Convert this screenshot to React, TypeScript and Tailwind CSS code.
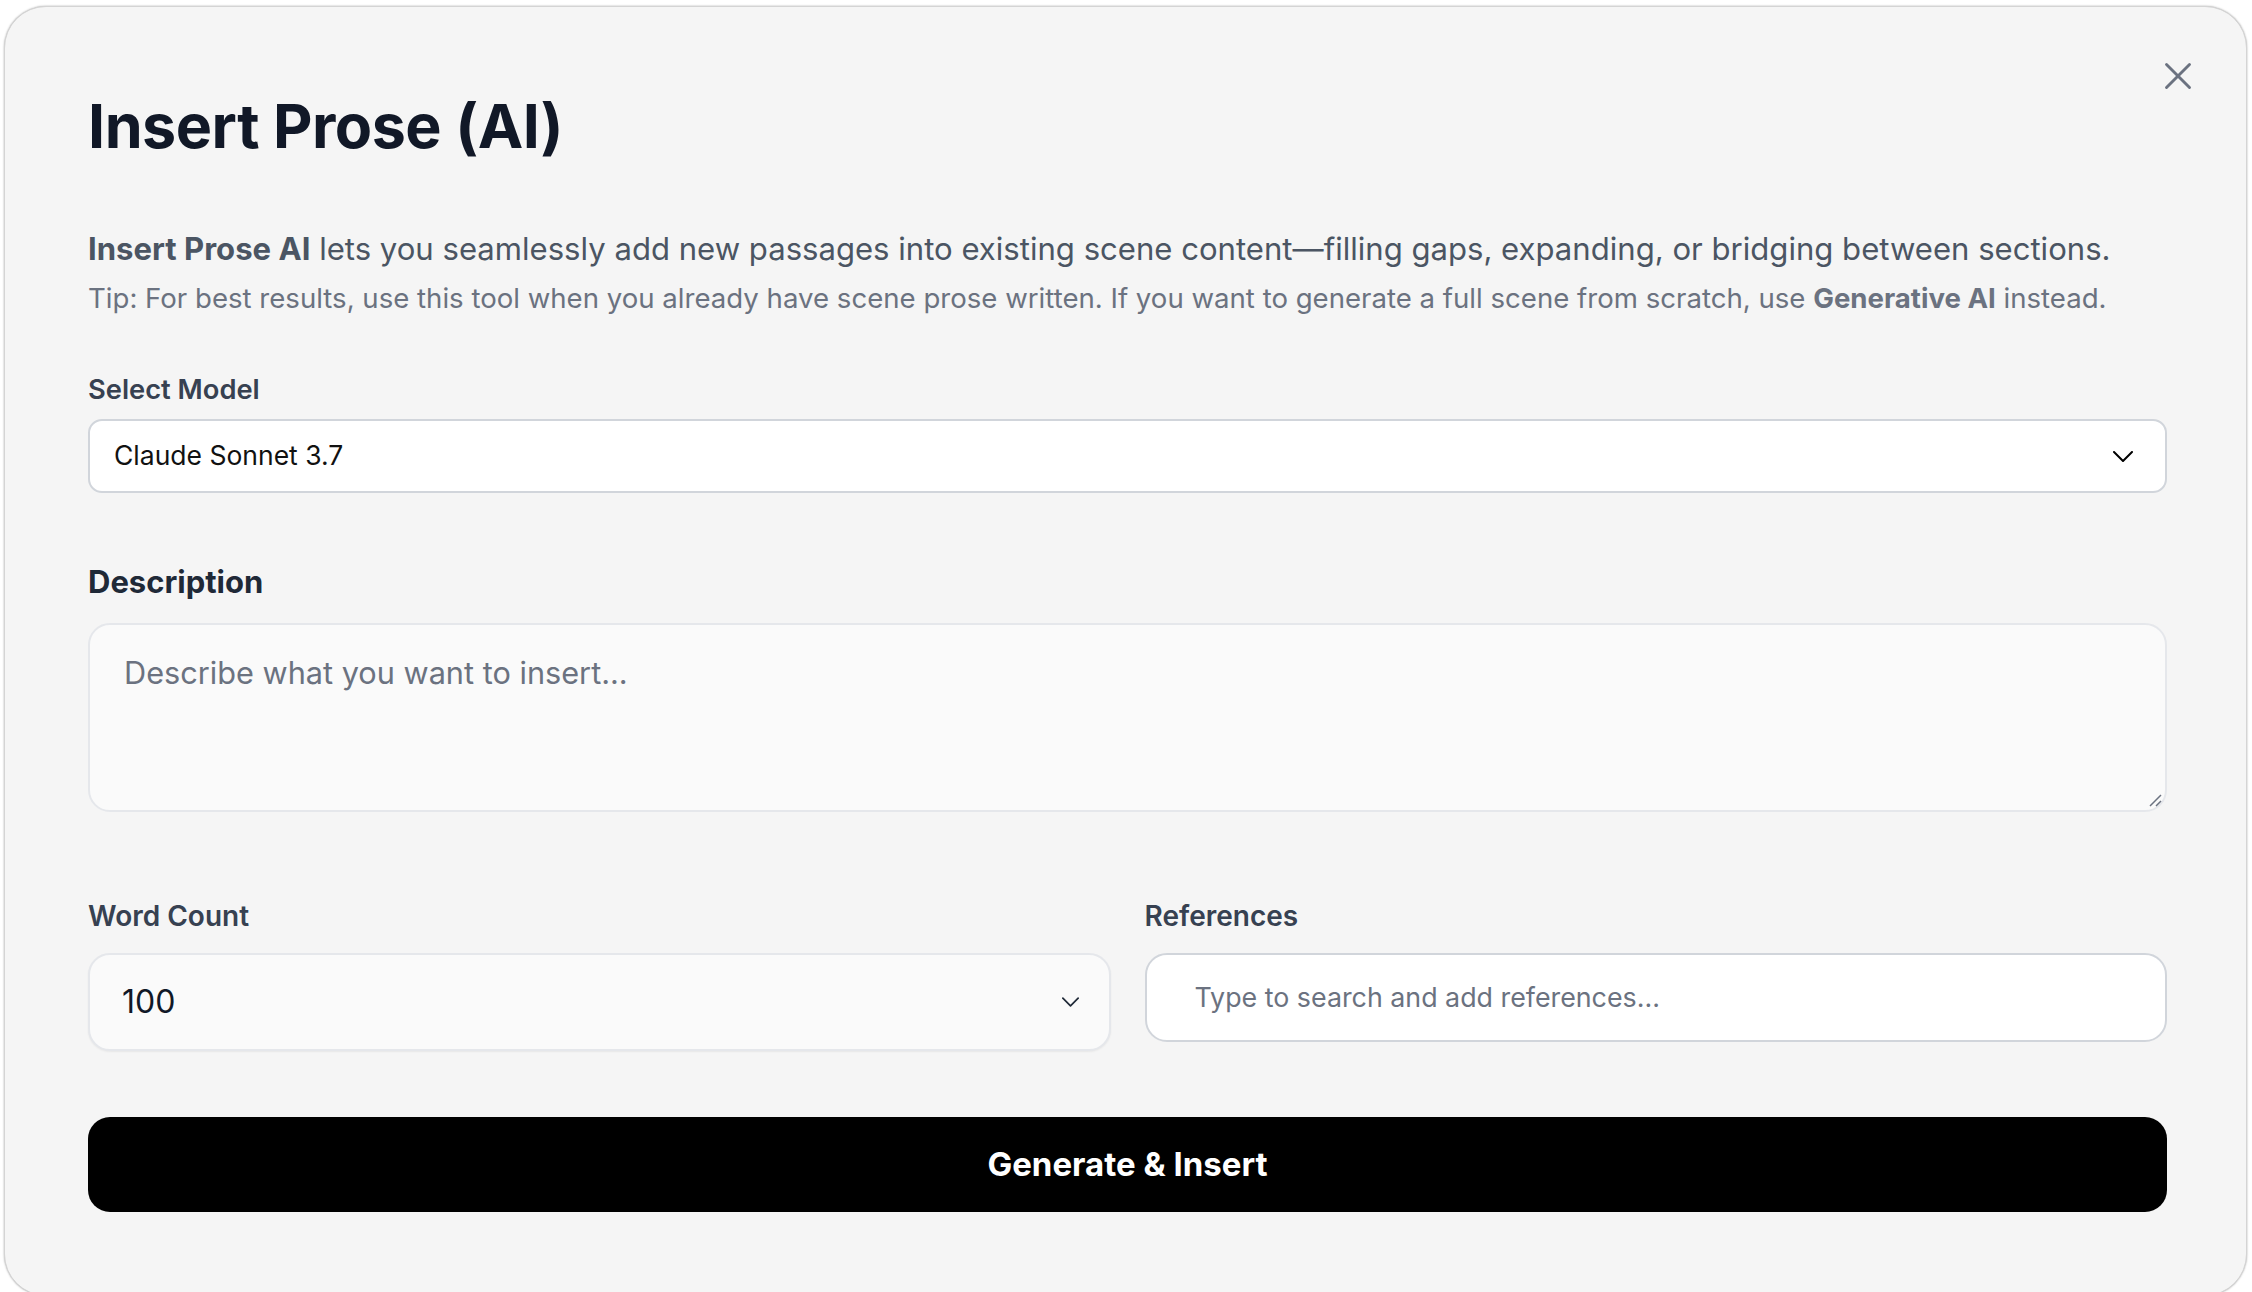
import { X } from 'lucide-react';

function Chevron({ className }: { className?: string }) {
    return (
        <svg viewBox="0 0 20 11" fill="none" className={className}>
            <path d="M1 1l9 9 9-9" stroke="currentColor" strokeWidth="2" strokeLinecap="round" strokeLinejoin="round" />
        </svg>
    );
}

export default function App() {
    return (
        <div className="w-full h-[1292px] bg-white pt-[6px] pl-[4px] pr-[5px] overflow-hidden" style={{ fontFamily: 'Inter, "Noto Sans", sans-serif' }}>
            <div className="relative h-[1290px] rounded-[42px] bg-[#f5f5f5] border border-[#d4d4d4] shadow-[0_0_2px_rgba(0,0,0,0.35)] pl-[83px] pr-[79px] pt-[83px] flex flex-col">
                {/* Close */}
                <button className="absolute top-[46px] right-[45px] text-[#6b7280]">
                    <X size={46} strokeWidth={1.5} />
                </button>

                <h1 className="text-[61px] leading-[72px] font-bold text-[#111827] tracking-[-0.5px]">Insert Prose (AI)</h1>

                <p className="mt-[65px] text-[31.1px] leading-[44px] text-[#4b5563]">
                    <span className="font-bold">Insert Prose AI</span> lets you seamlessly add new passages into existing scene content—filling gaps, expanding, or bridging between sections.
                </p>
                <p className="mt-[7px] text-[27.6px] leading-[40px] text-[#6b7280]">
                    Tip: For best results, use this tool when you already have scene prose written. If you want to generate a full scene from scratch, use <span className="font-bold">Generative AI</span> instead.
                </p>

                {/* Model */}
                <label className="mt-[52px] text-[27.3px] leading-[40px] font-semibold text-[#374151]">Select Model</label>
                <div className="mt-[9px] h-[74px] rounded-[14px] bg-white border-2 border-[#d1d5db] flex items-center justify-between pl-[24px] pr-[32px]">
                    <span className="text-[26.5px] text-[#111111]">Claude Sonnet 3.7</span>
                    <Chevron className="w-[20px] h-[11px] text-black" />
                </div>

                {/* Description */}
                <label className="mt-[67px] text-[31px] leading-[44px] font-bold text-[#1f2937]">Description</label>
                <div className="relative mt-[19px] h-[189px] rounded-[22px] bg-[#fafafa] border-2 border-[#e5e7eb] px-[34px] pt-[26px]">
                    <span className="text-[30.7px] leading-[44px] text-[#6b7280]">Describe what you want to insert...</span>
                    <svg viewBox="0 0 14 14" className="absolute right-[3px] bottom-[3px] w-[14px] h-[14px] text-[#6b7280]">
                        <path d="M13 2L2 13M13 8L8 13" stroke="currentColor" strokeWidth="1.5" />
                    </svg>
                </div>

                {/* Word count + references */}
                <div className="mt-[84px] grid grid-cols-2 gap-x-[34px]">
                    <div className="flex flex-col">
                        <label className="text-[28px] leading-[40px] font-semibold text-[#374151]">Word Count</label>
                        <div className="mt-[17px] h-[98px] rounded-[22px] bg-[#fafafa] border-2 border-[#e5e7eb] shadow-[0_1px_2px_rgba(0,0,0,0.06)] flex items-center justify-between pl-[32px] pr-[30px]">
                            <span className="text-[32px] text-[#111827]">100</span>
                            <Chevron className="w-[17px] h-[10px] text-[#1f2937]" />
                        </div>
                    </div>
                    <div className="flex flex-col">
                        <label className="text-[28px] leading-[40px] font-semibold text-[#374151]">References</label>
                        <div className="mt-[17px] h-[89px] rounded-[22px] bg-white border-2 border-[#d1d5db] flex items-center pl-[48px]">
                            <span className="text-[26.8px] text-[#6b7280]">Type to search and add references...</span>
                        </div>
                    </div>
                </div>

                <button className="mt-[66px] h-[95px] rounded-[22px] bg-black text-white text-[33px] font-bold">
                    Generate &amp; Insert
                </button>
            </div>
        </div>
    );
}
